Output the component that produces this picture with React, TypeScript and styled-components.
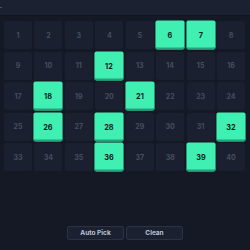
import React from 'react';
import { styled, createGlobalStyle } from 'styled-components';

const GlobalStyle = createGlobalStyle`
  html, body {
    margin: 0;
    padding: 0;
    background: #141925;
    font-family: 'Inter', 'Noto Sans', sans-serif;
  }
`;

const Page = styled.div`
  width: 250px;
  height: 250px;
  display: flex;
  flex-direction: column;
  background: #141925;
  overflow: hidden;
`;

const TopBar = styled.div`
  height: 15px;
  flex-shrink: 0;
  background: #1c2131;
  border-bottom: 1px solid #121622;
  display: flex;
  align-items: center;
  overflow: hidden;
`;

const BarTitle = styled.span`
  font-size: 5px;
  line-height: 5px;
  font-weight: 700;
  color: #aeb6c6;
`;

const Board = styled.div`
  padding: 5px 5px 0 4px;
  display: grid;
  grid-template-columns: repeat(8, 1fr);
  grid-auto-rows: 28px;
  column-gap: 2.6px;
  row-gap: 2.5px;
`;

const Cell = styled.div<{ $picked?: boolean }>`
  display: flex;
  align-items: center;
  justify-content: center;
  border-radius: 2px;
  font-size: 7px;
  font-weight: 700;
  background: ${(p) => (p.$picked ? '#3ff0b2' : '#1b2030')};
  color: ${(p) => (p.$picked ? '#0d1a1c' : '#474d5f')};
  box-shadow: ${(p) => (p.$picked ? 'inset 0 -2px 0 #22a37b' : 'none')};
  transform: ${(p) => (p.$picked ? 'scale(1.04)' : 'none')};
`;

const Actions = styled.div`
  margin-top: auto;
  margin-bottom: 10px;
  display: flex;
  justify-content: center;
  gap: 2px;
`;

const ActionButton = styled.button`
  width: 57px;
  height: 14px;
  padding: 0;
  border: 1px solid #2b3243;
  border-radius: 2px;
  background: #1b2131;
  color: #bcc3d3;
  font-family: 'Inter', 'Noto Sans', sans-serif;
  font-size: 6.5px;
  font-weight: 700;
`;

const picked = new Set([6, 7, 12, 18, 21, 26, 28, 32, 36, 39]);

export default function App() {
  const numbers = Array.from({ length: 40 }, (_, i) => i + 1);
  return (
    <>
      <GlobalStyle />
      <Page>
        <TopBar>
          <BarTitle>·</BarTitle>
        </TopBar>
        <Board>
          {numbers.map((n) => (
            <Cell key={n} $picked={picked.has(n)}>
              {n}
            </Cell>
          ))}
        </Board>
        <Actions>
          <ActionButton>Auto Pick</ActionButton>
          <ActionButton>Clean</ActionButton>
        </Actions>
      </Page>
    </>
  );
}
